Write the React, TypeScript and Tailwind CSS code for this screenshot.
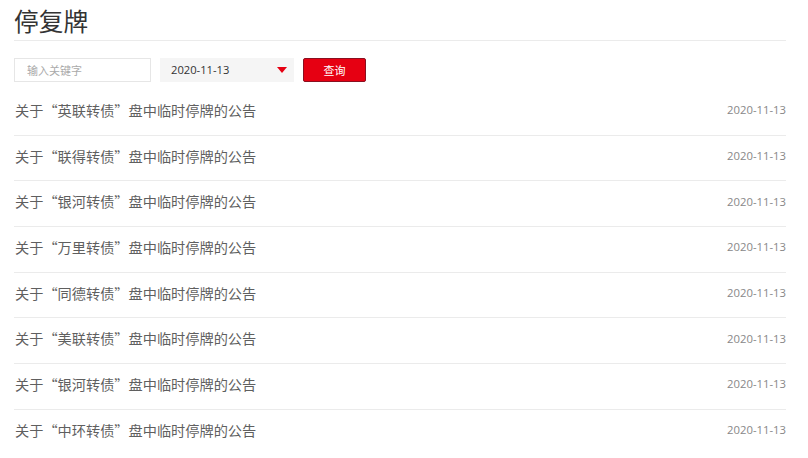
import React from 'react';

const notices = ['英联转债', '联得转债', '银河转债', '万里转债', '同德转债', '美联转债', '银河转债', '中环转债'];

const App: React.FC = () => {
  return (
    <div className="w-[808px] h-[458px] bg-white overflow-hidden font-['Open_Sans','Noto_Sans_CJK_SC',sans-serif]">
      <div className="ml-[14px] w-[772px]">
        <h1 className="h-[41px] border-b border-[#ebebeb] text-[24.7px] leading-[40px] text-[#333] font-normal font-['Noto_Sans_CJK_SC',sans-serif]">停复牌</h1>

        <div className="mt-[17px] flex items-center h-[24px]">
          <input
            placeholder="输入关键字"
            className="w-[137px] h-[24px] border border-[#e6e6e6] pl-[12px] pr-[8px] text-[11px] text-[#333] placeholder:text-[#aaa] outline-none font-['Noto_Sans_CJK_SC',sans-serif]"
          />
          <div className="ml-[9px] w-[134px] h-[24px] bg-[#f5f5f5] flex items-center justify-between pl-[11px] pr-[7px] text-[11.2px] text-[#333]">
            <span>2020-11-13</span>
            <svg width="10" height="6" viewBox="0 0 10 6">
              <path d="M0 0 L10 0 L5 6 Z" fill="#e60012" />
            </svg>
          </div>
          <button className="ml-[9px] w-[63px] h-[24px] bg-[#e60012] border border-[#8a1020] rounded-[2px] text-white text-[11px] font-['Noto_Sans_CJK_SC',sans-serif]">查询</button>
        </div>

        <div className="mt-[8px]">
          {notices.map((name, i) => (
            <div
              key={i}
              className="h-[45.67px] pb-[3px] border-b border-[#ebebeb] last:border-b-0 flex items-center justify-between"
            >
              <span className="pl-px text-[14.2px] text-[#5f5f5f] font-['Noto_Sans_CJK_SC',sans-serif]">关于“{name}”盘中临时停牌的公告</span>
              <span className="text-[11.3px] text-[#888]">2020-11-13</span>
            </div>
          ))}
        </div>
      </div>
    </div>
  );
};

export default App;
